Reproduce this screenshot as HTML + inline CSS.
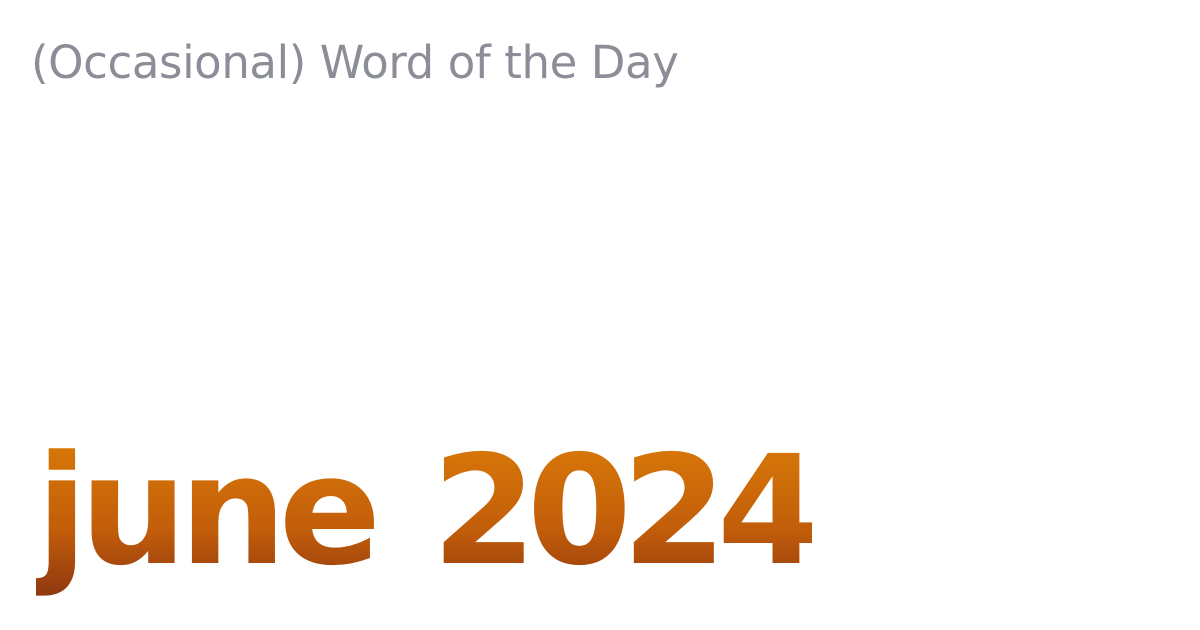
<!DOCTYPE html>
<html><head><style>
html,body{margin:0;padding:0;width:1200px;height:630px;background:#fff;overflow:hidden}
.t{position:absolute;left:31px;top:36px;font-family:"DejaVu Sans","Liberation Sans",sans-serif;font-size:45px;color:#8b8e97;white-space:nowrap;letter-spacing:-0.4px}
.b{position:absolute;left:36px;top:421px;font-family:"DejaVu Sans","Liberation Sans",sans-serif;font-weight:bold;font-size:151px;line-height:1.2;white-space:nowrap;letter-spacing:-8px;word-spacing:14px;
background:linear-gradient(180deg,#d87808 12%,#c25d0a 60%,#8b3510 100%);-webkit-background-clip:text;background-clip:text;color:transparent}
.b span{letter-spacing:-10px}
</style></head><body>
<div class="t">(Occasional) Word of the Day</div>
<div class="b">june <span>2024</span></div>
</body></html>
